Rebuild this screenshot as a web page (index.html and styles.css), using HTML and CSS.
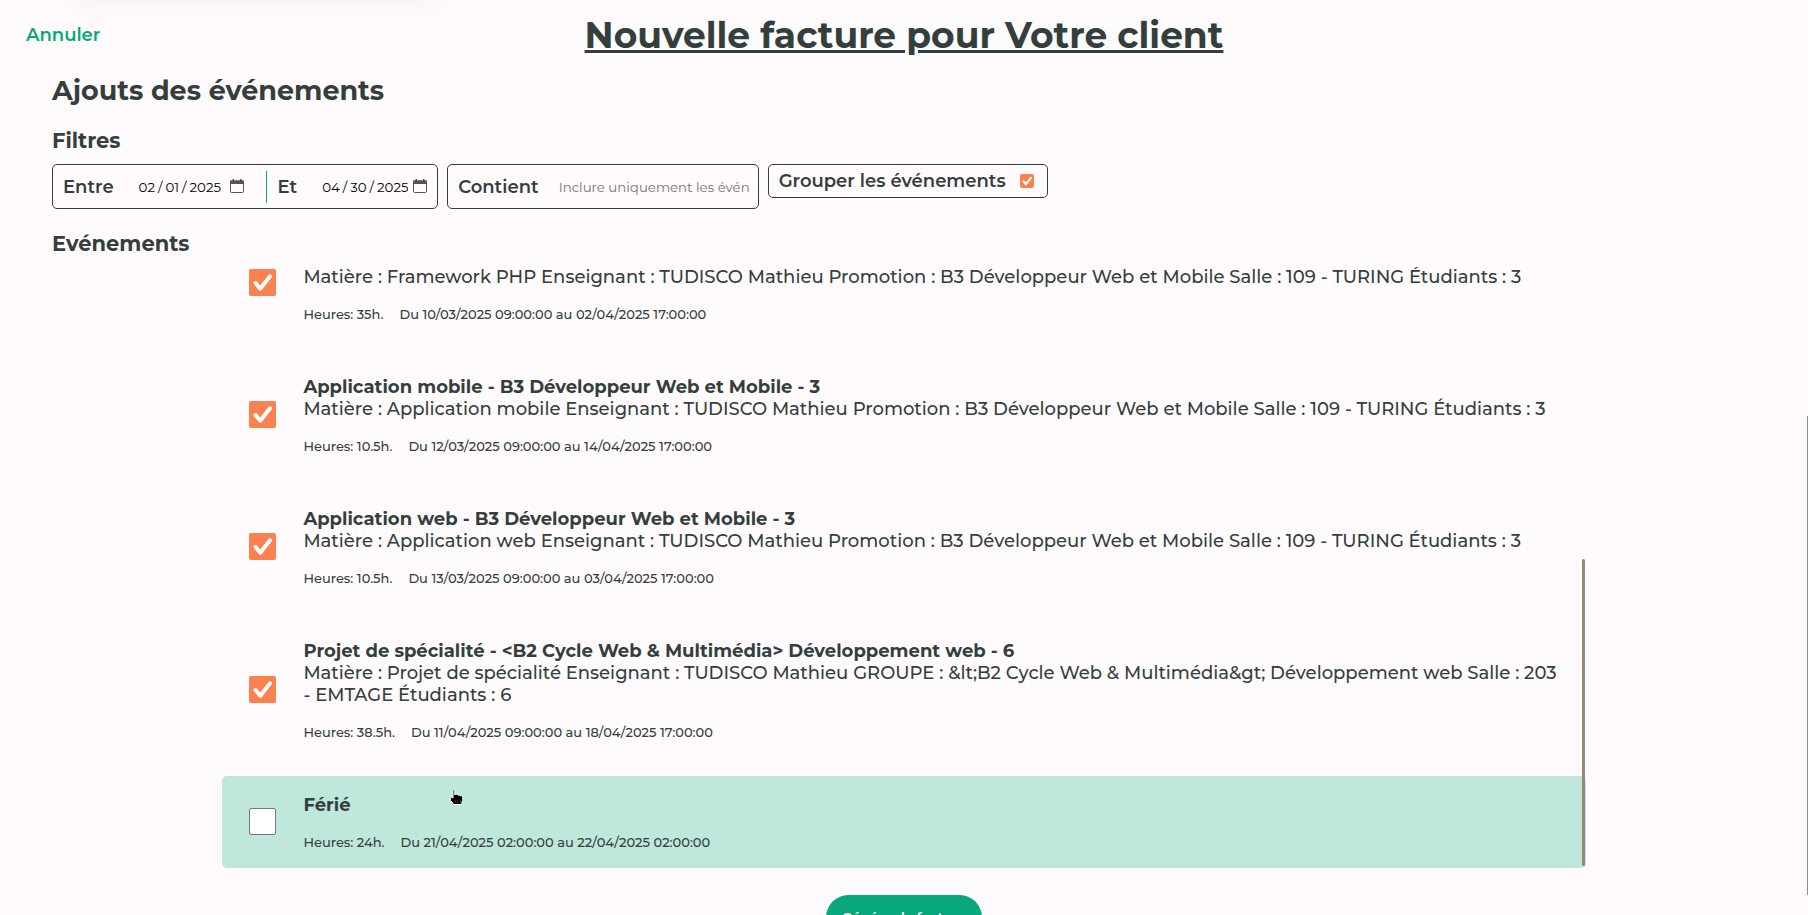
FILE: index.html
```html
<!DOCTYPE html>
<html lang="fr">
<head>
<meta charset="utf-8">
<title>Nouvelle facture</title>
<link rel="stylesheet" href="styles.css">
</head>
<body>
<div class="card-shadow"></div>
<div class="title-shadow"></div>
<header class="topbar">
  <a class="cancel" href="#">Annuler</a>
  <h1 class="title">Nouvelle facture pour Votre client</h1>
</header>
<main class="content">
  <h2 class="section-title">Ajouts des événements</h2>
  <h3 class="sub-title">Filtres</h3>
  <form class="filters">
    <div class="filter">
      <label class="filter-label" for="from">Entre</label>
      <input class="date date-from" type="date" id="from" value="2025-02-01">
      <span class="divider"></span>
      <label class="filter-label" for="to">Et</label>
      <input class="date" type="date" id="to" value="2025-04-30">
    </div>
    <div class="filter filter-text">
      <label class="filter-label" for="contains">Contient</label>
      <input class="search" type="text" id="contains" placeholder="Inclure uniquement les évén">
    </div>
    <div class="filter filter-group">
      <label class="filter-label" for="group">Grouper les événements</label>
      <input class="check check-small" type="checkbox" id="group" checked>
    </div>
  </form>
  <h3 class="sub-title events-title">Evénements</h3>
  <div class="events">
    <div class="event-list">
      <label class="event">
        <input class="check" type="checkbox" checked>
        <span class="event-body">
          <strong class="event-name">Framework PHP - B3 Développeur Web et Mobile - 3</strong>
          <span class="event-text">Matière : Framework PHP Enseignant : TUDISCO Mathieu Promotion : B3 Développeur Web et Mobile Salle : 109 - TURING Étudiants : 3</span>
          <span class="event-meta"><span>Heures: 35h.</span><span>Du 10/03/2025 09:00:00 au 02/04/2025 17:00:00</span></span>
        </span>
      </label>
      <label class="event">
        <input class="check" type="checkbox" checked>
        <span class="event-body">
          <strong class="event-name">Application mobile - B3 Développeur Web et Mobile - 3</strong>
          <span class="event-text">Matière : Application mobile Enseignant : TUDISCO Mathieu Promotion : B3 Développeur Web et Mobile Salle : 109 - TURING Étudiants : 3</span>
          <span class="event-meta"><span>Heures: 10.5h.</span><span>Du 12/03/2025 09:00:00 au 14/04/2025 17:00:00</span></span>
        </span>
      </label>
      <label class="event">
        <input class="check" type="checkbox" checked>
        <span class="event-body">
          <strong class="event-name">Application web - B3 Développeur Web et Mobile - 3</strong>
          <span class="event-text">Matière : Application web Enseignant : TUDISCO Mathieu Promotion : B3 Développeur Web et Mobile Salle : 109 - TURING Étudiants : 3</span>
          <span class="event-meta"><span>Heures: 10.5h.</span><span>Du 13/03/2025 09:00:00 au 03/04/2025 17:00:00</span></span>
        </span>
      </label>
      <label class="event">
        <input class="check" type="checkbox" checked>
        <span class="event-body">
          <strong class="event-name">Projet de spécialité - &lt;B2 Cycle Web &amp; Multimédia&gt; Développement web - 6</strong>
          <span class="event-text">Matière : Projet de spécialité Enseignant : TUDISCO Mathieu GROUPE : &amp;lt;B2 Cycle Web &amp; Multimédia&amp;gt; Développement web Salle : 203 - EMTAGE Étudiants : 6</span>
          <span class="event-meta"><span>Heures: 38.5h.</span><span>Du 11/04/2025 09:00:00 au 18/04/2025 17:00:00</span></span>
        </span>
      </label>
      <label class="event event-hover">
        <input class="check" type="checkbox">
        <span class="event-body">
          <strong class="event-name">Férié</strong>
          <span class="event-meta"><span>Heures: 24h.</span><span>Du 21/04/2025 02:00:00 au 22/04/2025 02:00:00</span></span>
        </span>
        <svg class="pointer" viewBox="0 0 16 18" width="16" height="18" aria-hidden="true">
          <path d="M4 1.500q1-.9 1.800.2V7l1-.9 1.600.2.600.9 1.400-.3.800.9 1.600-.100 1 1.200v3.600l-1 2.200v1.800H4.500L3.500 14.500 1.300 12.500V9.500l1.500-.3L4 10z" fill="#000" stroke="#fff" stroke-linejoin="round"/>
          <path d="M6.500 12.500v2M9 12.500v2M11.500 12.500v2" stroke="#777" stroke-width=".6"/>
        </svg>
      </label>
    </div>
    <span class="list-thumb"></span>
  </div>
  <button class="submit" type="submit">Générer la facture</button>
</main>
<span class="page-thumb"></span>
</body>
</html>
```
FILE: styles.css
```css
* { box-sizing: border-box; }

body {
  margin: 0;
  height: 100vh;
  overflow: hidden;
  position: relative;
  background: #fffbfc;
  color: #343f3d;
  font-family: Montserrat, Inter, sans-serif;
  font-size: 18px;
  font-weight: 500;
  line-height: 22px;
}

h1, h2, h3 { margin: 0; font-weight: 700; }

.card-shadow {
  position: absolute;
  top: -60px;
  left: 70px;
  width: 370px;
  height: 50px;
  box-shadow: 0 0 44px rgba(52, 63, 61, 0.1);
}

.title-shadow {
  position: absolute;
  top: 14px;
  left: 36%;
  width: 28%;
  height: 50px;
  border-radius: 25px;
  background: #fcfafb;
  filter: blur(10px);
}

.topbar {
  position: relative;
  display: grid;
  grid-template-columns: 1fr auto 1fr;
  align-items: center;
  padding: 13px 26px 11px;
}

.cancel {
  color: #09a77d;
  font-weight: 600;
  text-decoration: none;
}

.title {
  font-size: 36px;
  line-height: 44px;
  text-decoration: underline;
}

.content {
  display: flex;
  flex-direction: column;
  padding: 0 52px;
}

.section-title { margin-top: 6px; font-size: 27px; line-height: 33px; }

.sub-title { margin-top: 20px; font-size: 21px; line-height: 28px; }

.filters {
  display: flex;
  align-items: flex-start;
  gap: 9px;
  margin-top: 9px;
}

.filter {
  display: flex;
  align-items: center;
  height: 45px;
  padding: 0 10px;
  border: 1px solid #343f3d;
  border-radius: 5px;
}

.filter-text { padding-right: 7px; }

.filter-group { height: 34px; }

.filter-label { font-weight: 600; }

.date, .search {
  border: 0;
  padding: 0;
  background: transparent;
  font-family: inherit;
}

.date { width: 106px; color: #000; margin-left: 24px; }

.date-from { margin-right: 22px; }

.date::-webkit-datetime-edit-text { padding: 0 2px; }

.date::-webkit-calendar-picker-indicator {
  width: 14px;
  height: 14px;
  margin: 0 0 2px 5px;
  padding: 0;
  background: url("data:image/svg+xml,%3Csvg xmlns='http://www.w3.org/2000/svg' viewBox='0 0 14 14'%3E%3Crect x='.5' y='2' width='13' height='11.500' rx='1' fill='none' stroke='%23585254'/%3E%3Cpath d='M0 1.500h2.500V0H4v1.500h6V0h1.500v1.500H14V5H0z' fill='%23585254'/%3E%3C/svg%3E") center / 14px 14px no-repeat;
}

.divider { width: 1px; height: 32px; margin-right: 11px; background: #09a77d; }

.search { width: 192px; margin-left: 20px; }

.search::placeholder { color: #757575; }

.events-title { margin-top: 21px; }

.events {
  position: relative;
  width: 80%;
  margin: 9px auto 0;
}

.event-list {
  display: flex;
  flex-direction: column;
  justify-content: flex-end;
  gap: 18px;
  height: calc(66vh - 3px);
  overflow: hidden;
}

.event {
  position: relative;
  display: flex;
  flex-shrink: 0;
  align-items: center;
  gap: 27px;
  padding: 18px 27px;
  border-radius: 5px;
  cursor: pointer;
}

.event-hover { background: #c0e7dc; }

.check {
  appearance: none;
  flex: none;
  width: 27px;
  height: 27px;
  margin: 0;
  border: 1px solid #767680;
  border-radius: 2px;
  background: #fff;
}

.check:checked {
  border: 0;
  background: #fc8150 url("data:image/svg+xml,%3Csvg xmlns='http://www.w3.org/2000/svg' viewBox='0 0 27 27'%3E%3Cpath d='M6.500 14L11.300 19.700L21 7.300' fill='none' stroke='white' stroke-width='4' stroke-linecap='round' stroke-linejoin='round'/%3E%3C/svg%3E") center / contain no-repeat;
}

.check-small {
  width: 14px;
  height: 14px;
  margin: 0 3px 0 14px;
}

.event-body { display: flex; flex-direction: column; }

.event-meta {
  display: flex;
  gap: 16px;
  margin-top: 18px;
  font-size: 13px;
  line-height: 16px;
}

.pointer { position: absolute; left: 227px; top: 12px; }

.list-thumb {
  position: absolute;
  right: 1px;
  bottom: 2px;
  width: 3px;
  height: 51%;
  border-radius: 2px;
  background: #998675;
}

.submit {
  align-self: center;
  margin-top: 27px;
  padding: 14px 16px;
  border: 0;
  border-radius: 23px;
  background: #09a77d;
  color: #fff;
  font-family: inherit;
  font-weight: 600;
  line-height: 17px;
}

.page-thumb {
  position: fixed;
  right: 0;
  top: 416px;
  width: 1px;
  height: 479px;
  background: #998675;
}
```
